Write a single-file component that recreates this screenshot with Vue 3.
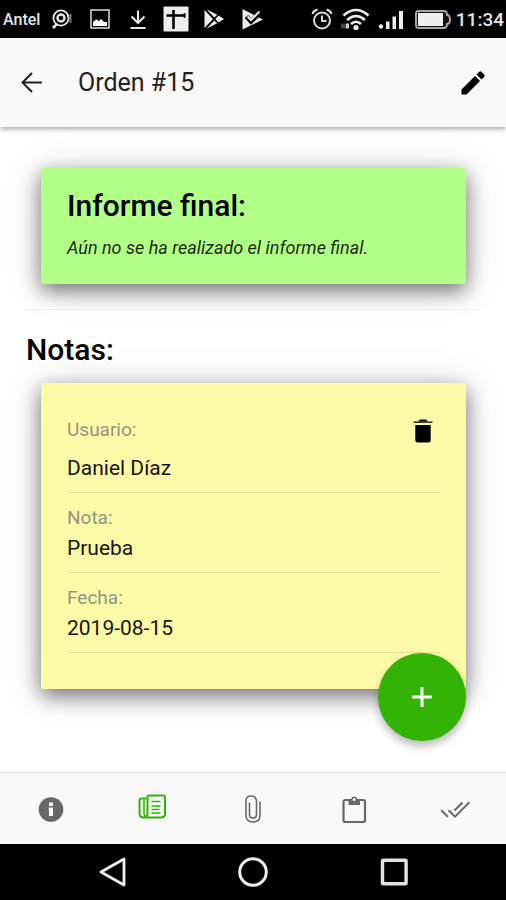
<script setup>
import { ref } from 'vue'

const note = [
  { label: 'Usuario:', value: 'Daniel Díaz' },
  { label: 'Nota:', value: 'Prueba' },
  { label: 'Fecha:', value: '2019-08-15' },
]
const tabs = ['Información', 'Notas', 'Adjuntos', 'Tareas', 'Finalizar']
const activeTab = ref(1)
</script>

<template>
  <div class="screen">
    <div class="status">
      <span class="carrier">Antel</span>
      <div class="notices">
        <svg viewBox="0 0 26 26" fill="none" stroke="#e8e8e8">
          <circle cx="12" cy="12" r="7.6" stroke-width="1.8" />
          <circle cx="12" cy="12" r="3.5" stroke-width="2.4" />
          <path d="M5 20.5l3-2" stroke-width="2.4" />
          <circle cx="5" cy="21" r="1.2" fill="#e8e8e8" />
          <path d="M21.5 8v9" stroke="#777" stroke-width="2" />
        </svg>
        <svg viewBox="0 0 26 26">
          <rect x="4" y="4" width="18" height="18" fill="none" stroke="#d0d0d0" stroke-width="1.6" />
          <path d="M6 20v-4l3-2.500 3 1.500 2-2 3 3h3v4z" fill="#fff" />
        </svg>
        <svg viewBox="0 0 26 26" fill="none" stroke="#e8e8e8" stroke-width="2">
          <path d="M13 4.500v12M6.500 10.500l6.500 6.500 6.500-6.500M5.500 22h15" />
        </svg>
        <svg viewBox="0 0 26 26">
          <rect x=".5" y=".5" width="25" height="25" rx="1" fill="#eee" />
          <path d="M3.500 9.500h19M10.500 4v19" stroke="#000" stroke-width="2.600" />
          <path d="M21.500 7v5" stroke="#000" stroke-width="1.600" />
        </svg>
        <svg viewBox="0 0 26 26" fill="#ececec">
          <path d="M3.500 4v18l8.500-9z" />
          <path d="M5.500 3.200l7.800 8.300 3-2.700zM5.500 22.800l7.800-8.300 3 2.700zM17.500 9.500l5.500 3.500-5.500 3.500-3.200-3.500z" />
        </svg>
        <svg viewBox="0 0 26 26">
          <path d="M3.500 3L24 13.500 3.500 23.500z" fill="#ececec" />
          <path d="M7.500 10.500l4.500 5L22.500 5.500" fill="none" stroke="#000" stroke-width="4.600" />
          <path d="M8.500 10.500l3.500 3.500 8.500-8.500" fill="none" stroke="#ececec" stroke-width="2" />
        </svg>
      </div>
      <div class="signals">
        <svg class="w24" viewBox="0 0 24 26" fill="none" stroke="#ddd" stroke-width="2">
          <circle cx="12" cy="14.500" r="8" />
          <path d="M12 9.500v5.500h4.500M2.500 8q1-3.500 5-4.500M21.500 8q-1-3.500-5-4.500" />
        </svg>
        <svg class="w34" viewBox="0 0 34 26" fill="none" stroke="#ededed" stroke-width="2.600">
          <path d="M5.500 9.500q12.500-11 25 0M9 14q9-8 18 0M13 18q5-4.500 10 0" />
          <circle cx="18" cy="21.500" r="1.300" fill="#ededed" />
          <path d="M3 20h5" stroke="#444" stroke-width="5" />
          <path d="M8 20h3" stroke="#ccc" stroke-width="5" />
        </svg>
        <svg class="w30" viewBox="0 0 30 26" fill="#eee">
          <circle cx="5" cy="20.500" r="2.200" />
          <path d="M10 15.500h3.500V23H10zM16.500 10.500H20V23h-3.500zM23 5h4v18h-4z" />
        </svg>
        <svg class="w42" viewBox="0 0 42 26">
          <path d="M8.500 5H34q3 0 3 4 3 0 3 4.500T37 18q0 4-3 4H8.500Q6 22 6 19V8q0-3 2.500-3z" fill="#111" stroke="#a5a5a5" stroke-width="2" />
          <rect x="8" y="7" width="25" height="13" fill="#eee" />
        </svg>
        <span class="clock">11:34</span>
      </div>
    </div>

    <header class="toolbar">
      <button class="icon-btn" aria-label="Volver">
        <svg width="24" height="24" viewBox="0 0 24 24" fill="none" stroke="#222" stroke-width="2">
          <path d="M22 11.500H2.500M12 2L2.500 11.500 12 21" />
        </svg>
      </button>
      <h1>Orden #15</h1>
      <button class="icon-btn" aria-label="Editar">
        <svg width="26" height="26" viewBox="0 0 26 26" fill="#000">
          <path d="M1.500 19.500L15 6l5 5L6.500 24.500h-5z" />
          <path d="M16.500 4.500l2.800-2.800q1-.8 2 0l3 3q.8 1 0 2l-2.800 2.800z" />
        </svg>
      </button>
    </header>

    <main>
      <section class="card report">
        <h2>Informe final:</h2>
        <p>Aún no se ha realizado el informe final.</p>
      </section>
      <hr />
      <h2>Notas:</h2>
      <section class="card note">
        <button class="icon-btn trash" aria-label="Eliminar nota">
          <svg width="20" height="24" viewBox="0 0 20 24" fill="#000">
            <path d="M5.500 2.500q.5-2 2-2h5q1.500 0 2 2z" />
            <path d="M.5 2.500h19v1.300H.5zM2.300 6h15.400v15q0 2.500-2.500 2.500H4.800q-2.500 0-2.500-2.500z" />
          </svg>
        </button>
        <dl>
          <div v-for="item in note" :key="item.label" class="field">
            <dt>{{ item.label }}</dt>
            <dd>{{ item.value }}</dd>
          </div>
        </dl>
      </section>
      <button class="fab" aria-label="Agregar nota">
        <svg width="20" height="20" viewBox="0 0 20 20" stroke="#fff" stroke-width="3">
          <path d="M10 0v20M0 10h20" />
        </svg>
      </button>
    </main>

    <nav class="tabs">
      <button
        v-for="(tab, i) in tabs"
        :key="tab"
        :class="{ active: i === activeTab }"
        :aria-label="tab"
        @click="activeTab = i"
      >
        <svg v-if="i === 0" viewBox="0 0 30 30">
          <circle cx="15" cy="15.500" r="12.300" fill="currentColor" />
          <path d="M13 8.500h4V12h-4zM12.500 13.500H17V22h-4v-7h-.5z" fill="#f8f8f8" />
        </svg>
        <svg v-else-if="i === 1" viewBox="0 0 30 30" fill="none" stroke="currentColor" stroke-width="2">
          <path d="M10.500 1.500h16q1.500 0 1.500 1.500V19.500q0 4-4 4H7q-4.500 0-4.500-4V6.500q0-2 2-2h5" />
          <path d="M10.500 1.500v18q0 3.500-3 3.500" />
          <path d="M7 5.500v14q0 2 1.500 2.500" stroke-width="1.500" />
          <path d="M14.500 7.500h9M14.500 12h9M14.500 15.500h8M14.500 19h9" stroke-width="1.600" />
        </svg>
        <svg v-else-if="i === 2" viewBox="0 0 30 30" fill="none" stroke="currentColor" stroke-width="1.600">
          <path d="M22 7.500V21q0 7-7 7t-7-7V7q0-5 5-5t5.500 5v13.500q0 3.500-3.500 3.500t-3.500-3.500V8.500" />
        </svg>
        <svg v-else-if="i === 3" viewBox="0 0 30 30" fill="none" stroke="currentColor" stroke-width="2.200">
          <rect x="4.500" y="6" width="21.500" height="22" rx="1.800" />
          <path d="M9.500 5H12Q12.500 2.500 15.200 2.500T18.500 5H21v6H9.500z" fill="currentColor" stroke="none" />
          <circle cx="15.200" cy="5.500" r="1.500" fill="#f8f8f8" stroke="none" />
        </svg>
        <svg v-else viewBox="0 0 30 30" fill="none" stroke="currentColor" stroke-width="2">
          <path d="M1.300 16.200l6.700 6.700M8.500 16.200l6.500 6.500L29.500 8.200M14.500 16.500l8-8" />
        </svg>
      </button>
    </nav>

    <div class="system">
      <button aria-label="Atrás">
        <svg viewBox="0 0 30 30" fill="none" stroke="#eee" stroke-width="2.800" stroke-linejoin="round">
          <path d="M4 15L27 2v26z" />
        </svg>
      </button>
      <button aria-label="Inicio">
        <svg viewBox="0 0 30 30" fill="none" stroke="#eee" stroke-width="3">
          <circle cx="15" cy="15" r="13.300" />
        </svg>
      </button>
      <button aria-label="Recientes">
        <svg viewBox="0 0 30 30" fill="none" stroke="#e4e4e4" stroke-width="3.400">
          <rect x="3.500" y="3.200" width="23.600" height="23.600" rx="1" />
        </svg>
      </button>
    </div>
  </div>
</template>

<style>
body {
  margin: 0;
  background: #fff;
}
</style>

<style scoped>
.screen {
  display: flex;
  flex-direction: column;
  min-height: 100vh;
  font-family: Roboto, sans-serif;
  color: #000;
}
button {
  display: flex;
  align-items: center;
  justify-content: center;
  padding: 0;
  border: 0;
  background: none;
  cursor: pointer;
}
h1,
h2,
p,
dl,
dd {
  margin: 0;
}
.status {
  display: flex;
  align-items: center;
  justify-content: space-between;
  height: 38px;
  padding: 0 2px 0 3px;
  background: #000;
  color: #e6e6e6;
}
.carrier {
  width: 46px;
  font-size: 16px;
  font-weight: 500;
}
.notices {
  display: flex;
  gap: 12px;
  margin-right: auto;
}
.notices svg {
  width: 26px;
  height: 26px;
}
.signals {
  display: flex;
  align-items: center;
  gap: 4px;
}
.signals svg {
  height: 26px;
}
.w24 {
  width: 24px;
}
.w30 {
  width: 30px;
}
.w34 {
  width: 34px;
}
.w42 {
  width: 42px;
}
.clock {
  font-size: 19px;
  font-weight: 500;
}
.toolbar {
  position: relative;
  display: flex;
  align-items: center;
  height: 89px;
  padding: 0 20px;
  background: #f8f8f8;
  box-shadow: 0 2px 5px rgba(0, 0, 0, 0.35);
}
.toolbar h1 {
  flex: 1;
  padding-left: 34px;
  font-size: 25px;
  font-weight: 400;
  color: #222;
}
main {
  position: relative;
  flex: 1;
  padding: 41px 26px 83px;
}
h2 {
  font-size: 30px;
  line-height: 36px;
  font-weight: 500;
}
.card {
  margin: 0 14px 0 15px;
  border-radius: 2px;
  box-shadow: 0 7px 20px rgba(0, 0, 0, 0.5), 0 2px 40px rgba(0, 0, 0, 0.14);
}
.report {
  padding: 20px 26px 24px;
  background: #b2ff88;
}
.report p {
  margin-top: 12px;
  font-size: 18px;
  line-height: 24px;
  font-style: italic;
  color: #1c2b14;
}
hr {
  margin: 25px 0 22px;
  border: 0;
  border-top: 1px solid #ebebeb;
}
.note {
  position: relative;
  margin-top: 15px;
  padding: 22px 26px 36px;
  background: #fdfaa7;
}
.trash {
  position: absolute;
  top: 36px;
  right: 33px;
}
.field {
  padding: 10px 0 9px;
  border-bottom: 1px solid #e6e29a;
}
.field:first-child dt {
  margin-bottom: 8px;
}
dt {
  font-size: 19px;
  line-height: 30px;
  color: #969286;
}
dd {
  font-size: 21px;
  line-height: 30px;
  color: #15150c;
}
.fab {
  position: absolute;
  right: 40px;
  bottom: 31px;
  width: 88px;
  height: 88px;
  border-radius: 50%;
  background: #32b306;
  box-shadow: 0 5px 8px rgba(0, 0, 0, 0.28);
}
.tabs {
  display: grid;
  grid-template-columns: repeat(5, 1fr);
  height: 71px;
  border-top: 1px solid #dedede;
  background: #f8f8f8;
}
.tabs button {
  color: #686868;
}
.tabs svg {
  width: 30px;
  height: 30px;
}
.tabs .active {
  color: #32b306;
}
.system {
  display: flex;
  align-items: center;
  justify-content: center;
  gap: 111px;
  height: 56px;
  background: #000;
}
.system svg {
  width: 30px;
  height: 30px;
}
</style>
